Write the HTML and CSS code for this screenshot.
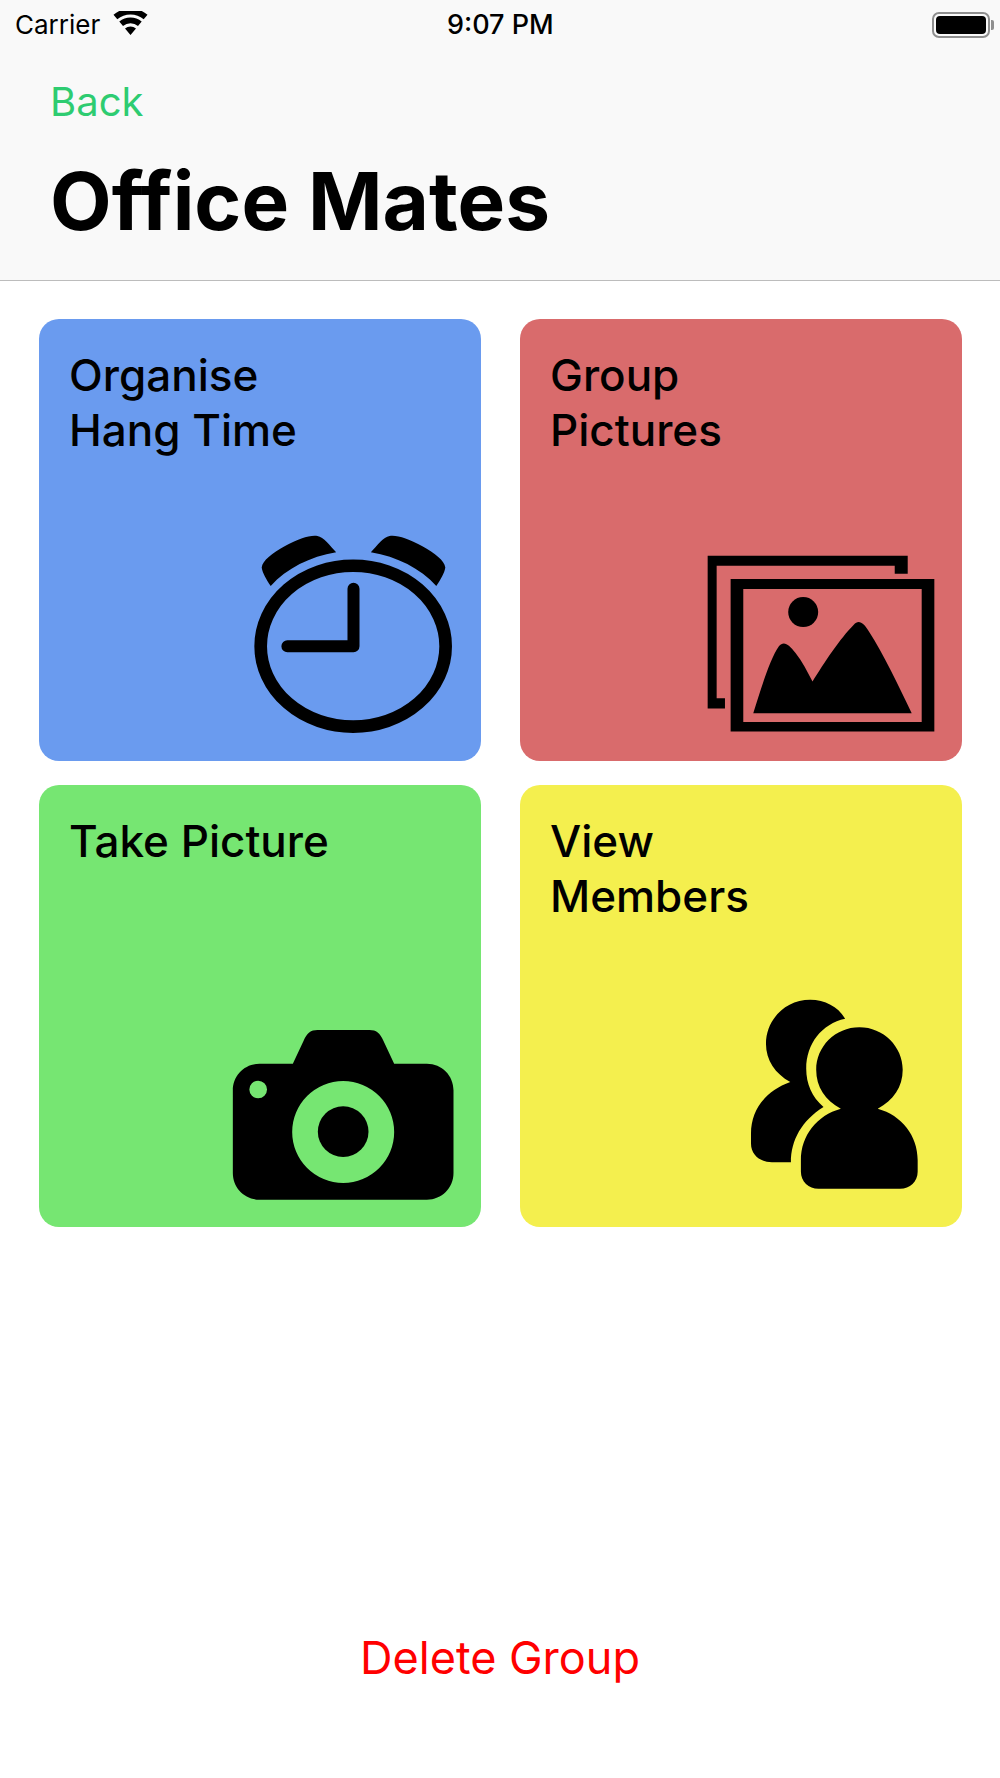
FILE: index.html
```html
<!DOCTYPE html>
<html lang="en">
<head>
<meta charset="utf-8">
<title>Office Mates</title>
<link rel="stylesheet" href="styles.css">
</head>
<body>
<div class="screen">
  <header class="nav">
    <div class="status">
      <div class="status-left">
        <span class="carrier">Carrier</span>
        <svg class="wifi" viewBox="0 0 35 24"><path d="M17.5 24 12 17.4a8.6 8.6 0 0 1 11 0ZM10 15 6.300 10.500a17.500 17.500 0 0 1 22.400 0L25 15a11.800 11.800 0 0 0-15 0ZM4.300 8.200 0.500 3.700a26.500 26.500 0 0 1 34 0L30.700 8.200a20.600 20.600 0 0 0-26.400 0Z"/></svg>
      </div>
      <span class="time">9:07 PM</span>
      <div class="battery"><span class="battery-fill"></span><span class="battery-cap"></span></div>
    </div>
    <a class="back">Back</a>
    <h1 class="title">Office Mates</h1>
  </header>
  <main class="grid">
    <section class="card blue">
      <h2 class="card-title">Organise<br>Hang Time</h2>
      <svg class="icon clock" viewBox="60 60 620 620">
        <path d="M122 228 C108 205 98 190 95 172 C98 152 125 130 165 108 C205 87 240 74 262 78 C280 80 300 108 318 127 C240 140 170 175 122 228Z"/>
        <path d="M618 228 C632 205 642 190 645 172 C642 152 615 130 575 108 C535 87 500 74 478 78 C460 80 440 108 422 127 C500 140 570 175 618 228Z"/>
        <ellipse cx="369" cy="408" rx="277" ry="241" fill="none" stroke="#000" stroke-width="38"/>
        <path d="M370 236V408H172" fill="none" stroke="#000" stroke-width="36" stroke-linecap="round" stroke-linejoin="round"/>
      </svg>
    </section>
    <section class="card red">
      <h2 class="card-title">Group<br>Pictures</h2>
      <svg class="icon pics" viewBox="40 70 700 540">
        <path d="M51 78H652V132H613V108H78V506H103V537H51Z"/>
        <path fill-rule="evenodd" d="M120 148H732V606H120ZM158 178V577H694V178Z"/>
        <circle cx="338" cy="247" r="45"/>
        <path d="M188 551C215 465 240 385 265 350C280 332 295 345 315 370C335 395 350 425 366 456C400 400 450 325 490 285C505 268 520 280 535 305C580 375 625 470 664 551Z"/>
      </svg>
    </section>
    <section class="card green">
      <h2 class="card-title">Take Picture</h2>
      <svg class="icon camera" viewBox="30 50 680 525">
        <path fill-rule="evenodd" d="M218 160 L250 92C260 68 272 59 292 59H448C468 59 480 68 490 92L522 160H620C665 160 700 195 700 240V488C700 533 665 568 620 568H118C73 568 38 533 38 488V240C38 195 73 160 118 160ZM369 212A153 153 0 1 0 369.100 518A153 153 0 1 0 369 212ZM114 211A26.500 26.500 0 1 0 114.100 264A26.500 26.500 0 1 0 114 211Z"/>
        <circle cx="369" cy="364" r="76"/>
      </svg>
    </section>
    <section class="card yellow">
      <h2 class="card-title">View<br>Members</h2>
      <svg class="icon people" viewBox="50 50 520 585">
        <path d="M345 115C325 80 285 58 240 58C165 58 107 118 107 190C107 240 135 280 180 305C110 330 62 385 62 460V490C62 525 90 546 125 546H182C182 480 215 420 280 380C245 350 228 310 228 265C228 190 275 130 345 115Z"/>
        <path d="M388 140C315 140 258 198 258 268C258 320 285 360 332 385C260 405 212 465 212 540V575C212 605 235 626 265 626H510C540 626 563 605 563 575V540C563 465 515 405 443 385C490 360 518 320 518 268C518 198 460 140 388 140Z"/>
      </svg>
    </section>
  </main>
  <button class="delete">Delete Group</button>
</div>
</body>
</html>
```
FILE: styles.css
```css
* { box-sizing: border-box; }
html, body { margin: 0; padding: 0; }
body { background: #fff; font-family: Inter, "Liberation Sans", sans-serif; color: #000; }
.screen { width: 1000px; height: 1778px; display: flex; flex-direction: column; overflow: hidden; }
.nav { height: 281px; background: #f9f9f9; border-bottom: 1px solid #bcbcbc; display: flex; flex-direction: column; }
.status { height: 50px; padding: 0 10px 0 15px; display: flex; align-items: center; justify-content: space-between; position: relative; }
.status-left { display: flex; align-items: center; gap: 13px; }
.carrier { font-size: 26px; line-height: 50px; }
.wifi { width: 35px; height: 24px; margin-bottom: 4px; }
.time { font-size: 27px; font-weight: 500; position: absolute; left: 447px; line-height: 50px; }
.battery { width: 58px; height: 26px; border: 2px solid #8e8e8e; border-radius: 7px; padding: 2px; margin-right: 0; display: flex; position: relative; }
.battery-fill { flex: 1; background: #000; border-radius: 4px; }
.battery-cap { position: absolute; right: -6px; top: 6px; width: 3px; height: 10px; background: #8e8e8e; border-radius: 0 2px 2px 0; }
.back { font-size: 40px; color: #2ecc71; margin: 30px 0 0 50px; line-height: 44px; font-weight: 400; }
.title { font-size: 80px; font-weight: 700; margin: 32px 0 0 50px; line-height: 90px; }
.grid { display: grid; grid-template-columns: 442px 442px; grid-auto-rows: 442px; column-gap: 39px; row-gap: 24px; padding: 38px 0 0 39px; }
.card { border-radius: 20px; padding: 29px 30px 0; display: flex; flex-direction: column; }
.blue { background: #6a9bef; }
.red { background: #d96b6c; }
.green { background: #76e672; }
.yellow { background: #f4ef4e; }
.card-title { font-size: 44px; font-weight: 500; line-height: 54.500px; margin: 0; }
.icon { display: block; margin-top: auto; margin-left: auto; }
.clock { width: 207px; height: 207px; margin-right: -6px; margin-bottom: 24px; }
.pics { width: 233px; height: 180px; margin-right: -5px; margin-bottom: 28px; }
.camera { width: 227px; height: 175px; margin-right: -6px; margin-bottom: 25px; }
.people { width: 173px; height: 195px; margin-right: 12px; margin-bottom: 35px; }
.delete { background: none; border: 0; padding: 0; font: inherit; font-size: 45px; color: #ff0000; margin-top: auto; margin-bottom: 93px; align-self: center; line-height: 54px; }
```
